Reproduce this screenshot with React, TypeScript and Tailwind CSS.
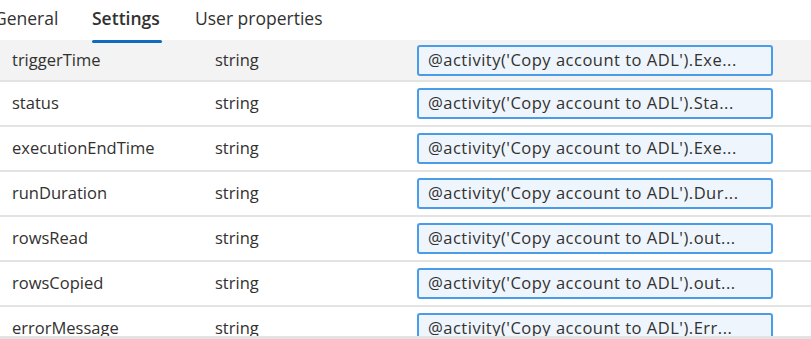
import React from 'react';

type Row = { name: string; type: string; value: string };

const rows: Row[] = [
  { name: 'triggerTime', type: 'string', value: "@activity('Copy account to ADL').Exe..." },
  { name: 'status', type: 'string', value: "@activity('Copy account to ADL').Sta..." },
  { name: 'executionEndTime', type: 'string', value: "@activity('Copy account to ADL').Exe..." },
  { name: 'runDuration', type: 'string', value: "@activity('Copy account to ADL').Dur..." },
  { name: 'rowsRead', type: 'string', value: "@activity('Copy account to ADL').out..." },
  { name: 'rowsCopied', type: 'string', value: "@activity('Copy account to ADL').out..." },
  { name: 'errorMessage', type: 'string', value: "@activity('Copy account to ADL').Err..." },
];

const Tabs = () => (
  <div className="flex h-[40px] items-center pb-[4px] text-[17.5px] text-[#323130]">
    <div className="-ml-[6px] w-[98px]">General</div>
    <div className="relative w-[103px] font-semibold">
      Settings
      <span className="absolute -bottom-[12px] left-0 h-[3px] w-[70px] rounded-sm bg-[#0f6cbd]" />
    </div>
    <div>User properties</div>
  </div>
);

export default function App() {
  return (
    <div
      className="flex h-[339px] w-[811px] flex-col overflow-hidden bg-white"
      style={{ fontFamily: '"Open Sans", "Noto Sans", sans-serif' }}
    >
      <Tabs />
      {/* parameter rows */}
      <div className="flex-1 overflow-hidden text-[16.5px] text-[#323130]">
        {rows.map((row, i) => (
          <div
            key={row.name}
            className={`flex items-center border-b-2 border-[#e3e3e3] ${
              i === 0 ? 'h-[42px] bg-[#f3f3f3]' : 'h-[45px]'
            }`}
          >
            <div className="w-[215px] pl-[12px]">{row.name}</div>
            <div className="w-[202px]">{row.type}</div>
            <div className="flex h-[31px] w-[356px] items-center whitespace-nowrap rounded-[3px] border-2 border-[#4a9be8] bg-[#eef5fd] pl-[9px] tracking-[0.5px]">
              {row.value}
            </div>
          </div>
        ))}
      </div>
      <div className="h-[3px] bg-[#e3e3e3]" />
    </div>
  );
}
